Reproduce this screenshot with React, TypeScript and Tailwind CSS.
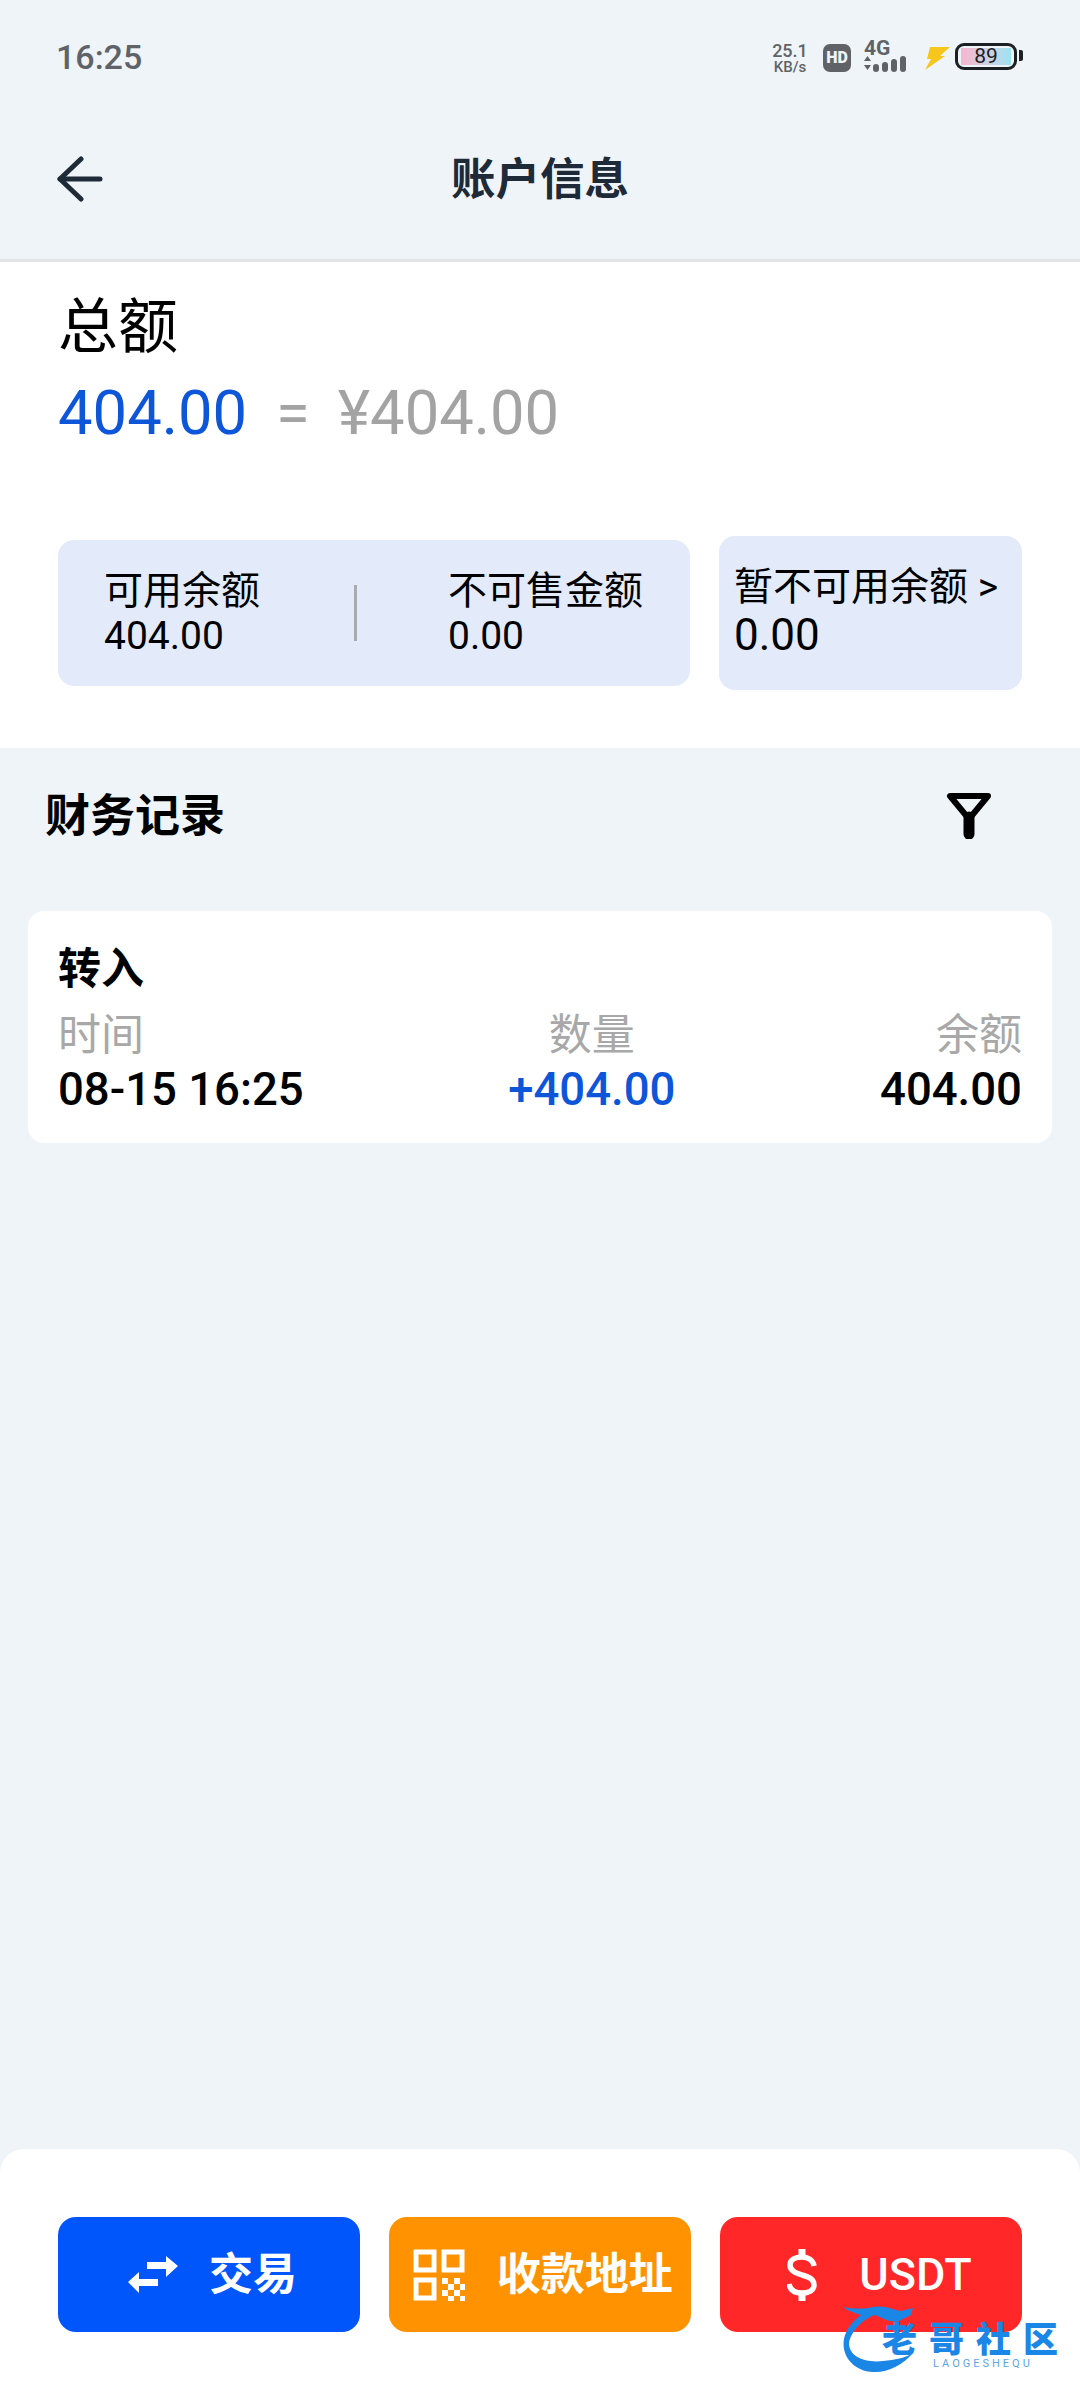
const font = "font-['Roboto','Noto_Sans_CJK_SC',sans-serif]";

const BackIcon = () => (
  <svg width="46" height="46" viewBox="0 0 46 46" fill="none" stroke="#1e2a38" strokeWidth="5" strokeLinecap="round" strokeLinejoin="round">
    <path d="M3 23H43" />
    <path d="M24 3L3 23L24 43" />
  </svg>
);

const FilterIcon = () => (
  <svg width="46" height="46" viewBox="0 0 46 46" fill="none" stroke="#000" strokeLinejoin="round">
    <path d="M4 3H42L23 26Z" strokeWidth="6" />
    <path d="M23 24V41" strokeWidth="11" strokeLinecap="round" />
  </svg>
);

const SwapIcon = () => (
  <svg width="50" height="38" viewBox="0 0 50 38" fill="#fff">
    <path d="M19 6H38V0L50 10L38 21V13H19Z" />
    <path d="M30 23H11V16L0 26L11 37V30H30Z" />
  </svg>
);

const QrIcon = () => (
  <svg width="52" height="52" viewBox="0 0 52 52" fill="none" stroke="#fff" strokeWidth="5">
    <rect x="3" y="3" width="18" height="18" />
    <rect x="31" y="3" width="18" height="18" />
    <rect x="3" y="31" width="18" height="18" />
    <g fill="#fff" stroke="none">
      <rect x="29" y="29" width="6" height="6" />
      <rect x="41" y="29" width="6" height="6" />
      <rect x="35" y="35" width="6" height="6" />
      <rect x="47" y="35" width="5" height="6" />
      <rect x="29" y="41" width="6" height="6" />
      <rect x="41" y="41" width="6" height="6" />
      <rect x="35" y="47" width="6" height="5" />
      <rect x="47" y="47" width="5" height="5" />
    </g>
  </svg>
);

const DollarIcon = () => (
  <svg width="30" height="52" viewBox="0 0 30 52" fill="none" stroke="#fff" strokeWidth="5.5">
    <path d="M27 17C26 11 21 8 15 8C8 8 3 11 3 16C3 22 9 24 15 26C22 28 27 30 27 36C27 41 22 44 15 44C8 44 3 41 2 35" />
    <path d="M15 0V8M15 44V52" strokeWidth="7" />
  </svg>
);

const SignalIcon = () => (
  <svg width="44" height="17" viewBox="0 0 44 17" fill="#5f6368">
    <path d="M3.5 1L7 6H0Z" />
    <path d="M0 10H7L3.5 15Z" />
    <rect x="9" y="9" width="6" height="8" rx="3" />
    <rect x="18" y="7" width="6" height="10" rx="3" />
    <rect x="27" y="4" width="6" height="13" rx="3" />
    <rect x="36" y="1" width="6" height="16" rx="3" />
  </svg>
);

const BoltIcon = () => (
  <svg width="25" height="23" viewBox="0 0 25 23" fill="#f6c61d">
    <path d="M5 0H25L15 9H20L0 23L6 12H2Z" />
  </svg>
);

const DragonMark = () => (
  <svg width="220" height="68" viewBox="0 0 220 68" fill="#1a86e6">
    <path d="M0 2C10 4 22 4 30 2C42 0 48 4 58 6L70 3L68 10L60 14C50 20 42 14 32 10C20 14 8 26 6 38C6 52 22 58 40 56C52 55 62 53 70 48C60 60 44 68 30 67C10 66 -2 50 1 34C3 24 10 16 18 10C12 8 5 6 0 2Z" />
  </svg>
);

const App = () => {
  return (
    <div className={`${font} relative flex h-[2400px] w-[1080px] flex-col overflow-hidden bg-[#eff4f9] text-black`}>
      {/* status bar + nav */}
      <header className="h-[262px] shrink-0 border-b-[3px] border-[#e2e3e4]">
        <div className="flex h-[114px] items-start justify-between pl-[56px] pr-[57px]">
          <span className="mt-[37px] text-[34px] leading-[40px] font-medium text-[#5f6368]">16:25</span>
          <div className="mt-[41px] flex items-start">
            <div className="flex w-[38px] flex-col items-center text-[#5f6368]">
              <span className="text-[18px] leading-[19px] font-medium">25.1</span>
              <span className="text-[15px] leading-[14px] font-medium">KB/s</span>
            </div>
            <div className="mt-[3px] ml-[14px] flex h-[28px] w-[28px] items-center justify-center rounded-[7px] bg-[#5f6368] text-[16px] leading-none font-black text-[#eff4f9]">
              HD
            </div>
            <div className="ml-[13px] flex w-[44px] flex-col">
              <span className="text-[21px] leading-[14px] font-bold text-[#5f6368]">4G</span>
              <SignalIcon />
            </div>
            <div className="mt-[6px] ml-[17px]">
              <BoltIcon />
            </div>
            <div className="mt-[2px] ml-[5px] flex h-[27px] w-[62px] items-center rounded-[9px] border-[3px] border-[#1c2024] px-[3px]">
              <div className="flex h-[17px] flex-1 items-center justify-center bg-linear-to-r from-[#f8b6cf] to-[#9be3f2] text-[21px] leading-none text-[#1c2024]">
                89
              </div>
            </div>
            <div className="mt-[9px] ml-[2px] h-[11px] w-[4px] rounded-r-[2px] bg-[#1c2024]" />
          </div>
        </div>
        <div className="relative flex h-[130px] items-center justify-center">
          <div className="absolute top-[42px] left-[57px]">
            <BackIcon />
          </div>
          <h1 className="mt-[2px] text-[44.5px] leading-[60px] font-semibold text-[#1e2a38]">账户信息</h1>
        </div>
      </header>

      {/* balance */}
      <section className="h-[486px] shrink-0 bg-white pl-[58px] pt-[26px]">
        <div className="text-[60px] leading-[80px]">总额</div>
        <div className="mt-[10px] flex text-[61.5px] leading-[70px]">
          <span className="text-[#0d55d9]">404.00</span>
          <span className="ml-[29px] text-[#a3a3a3]">=</span>
          <span className="ml-[28px] text-[#a3a3a3]">¥404.00</span>
        </div>
        <div className="mt-[88px] flex items-center gap-[29px] pr-[58px]">
          <div className="flex h-[146px] w-[632px] items-center rounded-[16px] bg-[#e3eafa]">
            <div className="w-[296px] pl-[46px]">
              <div className="text-[39px] leading-[46px]">可用余额</div>
              <div className="text-[39px] leading-[44px]">404.00</div>
            </div>
            <div className="h-[56px] w-[3px] bg-[#a9abae]" />
            <div className="pl-[91px]">
              <div className="text-[39px] leading-[46px]">不可售金额</div>
              <div className="text-[39px] leading-[44px]">0.00</div>
            </div>
          </div>
          <div className="h-[154px] flex-1 rounded-[16px] bg-[#e3eafa] pl-[15px] pt-[27px]">
            <div className="whitespace-nowrap text-[39px] leading-[48px]">暂不可用余额 &gt;</div>
            <div className="text-[44px] leading-[48px]">0.00</div>
          </div>
        </div>
      </section>

      {/* records */}
      <section className="flex-1 pt-[37px]">
        <div className="flex items-center justify-between pl-[45px] pr-[88px]">
          <h2 className="mt-[2px] text-[45px] leading-[60px] font-semibold">财务记录</h2>
          <FilterIcon />
        </div>
        <div className="mx-[28px] mt-[64px] h-[232px] rounded-[16px] bg-white px-[30px] pt-[30px]">
          <div className="text-[43px] leading-[56px] font-semibold">转入</div>
          <div className="mt-[10px] flex justify-between">
            <div className="flex flex-col items-start">
              <span className="text-[43px] leading-[56px] text-[#a8a8a8]">时间</span>
              <span className="text-[45.5px] leading-[53px] font-medium">08-15 16:25</span>
            </div>
            <div className="flex flex-col items-center">
              <span className="text-[43px] leading-[56px] text-[#a8a8a8]">数量</span>
              <span className="text-[45.5px] leading-[53px] font-medium text-[#0d55d9]">+404.00</span>
            </div>
            <div className="flex flex-col items-end">
              <span className="text-[43px] leading-[56px] text-[#a8a8a8]">余额</span>
              <span className="text-[45.5px] leading-[53px] font-medium">404.00</span>
            </div>
          </div>
        </div>
      </section>

      {/* actions */}
      <footer className="flex h-[251px] shrink-0 gap-[29px] rounded-t-[24px] bg-white px-[58px] pt-[68px]">
        <button className="flex h-[115px] w-[302px] items-center gap-[31px] rounded-[18px] bg-[#0055fb] pl-[70px] text-[44px] font-bold text-white">
          <SwapIcon />
          <span>交易</span>
        </button>
        <button className="flex h-[115px] w-[303px] items-center gap-[32px] rounded-[18px] bg-[#ff9200] pl-[24px] text-[44px] font-bold whitespace-nowrap text-white">
          <QrIcon />
          <span>收款地址</span>
        </button>
        <button className="flex h-[115px] w-[302px] items-center gap-[42px] rounded-[18px] bg-[#ff2727] pl-[67px] text-[45px] font-medium text-white">
          <DollarIcon />
          <span>USDT</span>
        </button>
      </footer>

      {/* watermark */}
      <div className="absolute top-[2305px] left-[843px] h-[68px] w-[220px]">
        <DragonMark />
        <span className="absolute top-[21px] left-[39px] text-[35px] leading-[30px] font-black tracking-[12px] whitespace-nowrap text-[#1a86e6]">
          老哥社区
        </span>
        <span className="absolute top-[53px] left-[90px] text-[11px] leading-[12px] tracking-[3px] text-[#5aa6ea]">
          LAOGESHEQU
        </span>
      </div>
    </div>
  );
};

export default App;
